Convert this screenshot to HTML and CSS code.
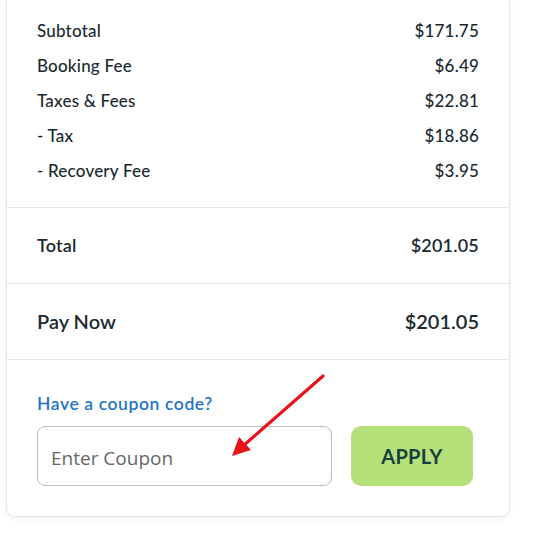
FILE: index.html
```html
<!DOCTYPE html>
<html>
<head>
<meta charset="utf-8">
<link rel="stylesheet" href="styles.css">
</head>
<body>
<div class="card">
  <div class="section lines">
    <div class="row"><span>Subtotal</span><span>$171.75</span></div>
    <div class="row"><span>Booking Fee</span><span>$6.49</span></div>
    <div class="row"><span>Taxes &amp; Fees</span><span>$22.81</span></div>
    <div class="row"><span>- Tax</span><span>$18.86</span></div>
    <div class="row"><span>- Recovery Fee</span><span>$3.95</span></div>
  </div>
  <div class="section total">
    <span>Total</span><span>$201.05</span>
  </div>
  <div class="section paynow">
    <span>Pay Now</span><span>$201.05</span>
  </div>
  <div class="section coupon">
    <div class="coupon-title">Have a coupon code?</div>
    <div class="coupon-form">
      <input class="coupon-input" type="text" placeholder="Enter Coupon">
      <button class="apply">APPLY</button>
    </div>
    <svg class="arrow" width="110" height="100" viewBox="0 0 110 100">
      <line x1="100" y1="10" x2="20" y2="80" stroke="#e8141b" stroke-width="3.2" stroke-linecap="round"/>
      <polygon points="9,90 16,71 28,84" fill="#e8141b"/>
    </svg>
  </div>
</div>
</body>
</html>
```

FILE: styles.css
```css
html, body {
  margin: 0;
  padding: 0;
  background: #ffffff;
}
body {
  font-family: "Lato", "Liberation Sans", sans-serif;
  color: #1c2a30;
  width: 553px;
  height: 533px;
  overflow: hidden;
}
.card {
  margin-left: 6px;
  width: 502px;
  border: 1px solid #e6e6e6;
  border-top: none;
  border-radius: 0 0 9px 9px;
  box-shadow: 0 2px 6px rgba(0, 0, 0, 0.05);
  background: #fff;
}
.section {
  padding: 0 30px;
  border-bottom: 1px solid #e6e6e6;
}
.section:last-child {
  border-bottom: none;
}
.lines {
  padding-top: 13px;
  padding-bottom: 19px;
}
.row {
  display: flex;
  justify-content: space-between;
  align-items: center;
  height: 35px;
  font-size: 17px;
  font-weight: 500;
  letter-spacing: 0.2px;
}
.total, .paynow {
  display: flex;
  justify-content: space-between;
  align-items: center;
  box-sizing: border-box;
  height: 76px;
  padding-bottom: 2px;
}
.total {
  font-size: 18px;
  font-weight: 600;
  letter-spacing: 0.2px;
}
.paynow {
  font-size: 20px;
  font-weight: 600;
}
.coupon {
  position: relative;
  padding-top: 34px;
  padding-bottom: 30px;
}
.coupon-title {
  color: #1f76c4;
  font-size: 17.5px;
  font-weight: 600;
  line-height: 20px;
  letter-spacing: 0.6px;
}
.coupon-form {
  display: flex;
  gap: 19px;
  margin-top: 12px;
}
.coupon-input {
  box-sizing: border-box;
  width: 295px;
  height: 60px;
  border: 1px solid #bdbdbd;
  border-radius: 8px;
  padding: 4px 13px 0;
  font-family: "Open Sans", "Liberation Sans", sans-serif;
  font-size: 19px;
  color: #333;
  outline: none;
}
.coupon-input::placeholder {
  color: #676767;
}
.apply {
  width: 122px;
  height: 60px;
  border: none;
  border-radius: 10px;
  background: #b6e07a;
  color: #163f3d;
  font-family: "Lato", "Liberation Sans", sans-serif;
  font-size: 20px;
  font-weight: 700;
  letter-spacing: 0.3px;
}
.arrow {
  position: absolute;
  left: 216px;
  top: 6px;
}
```
